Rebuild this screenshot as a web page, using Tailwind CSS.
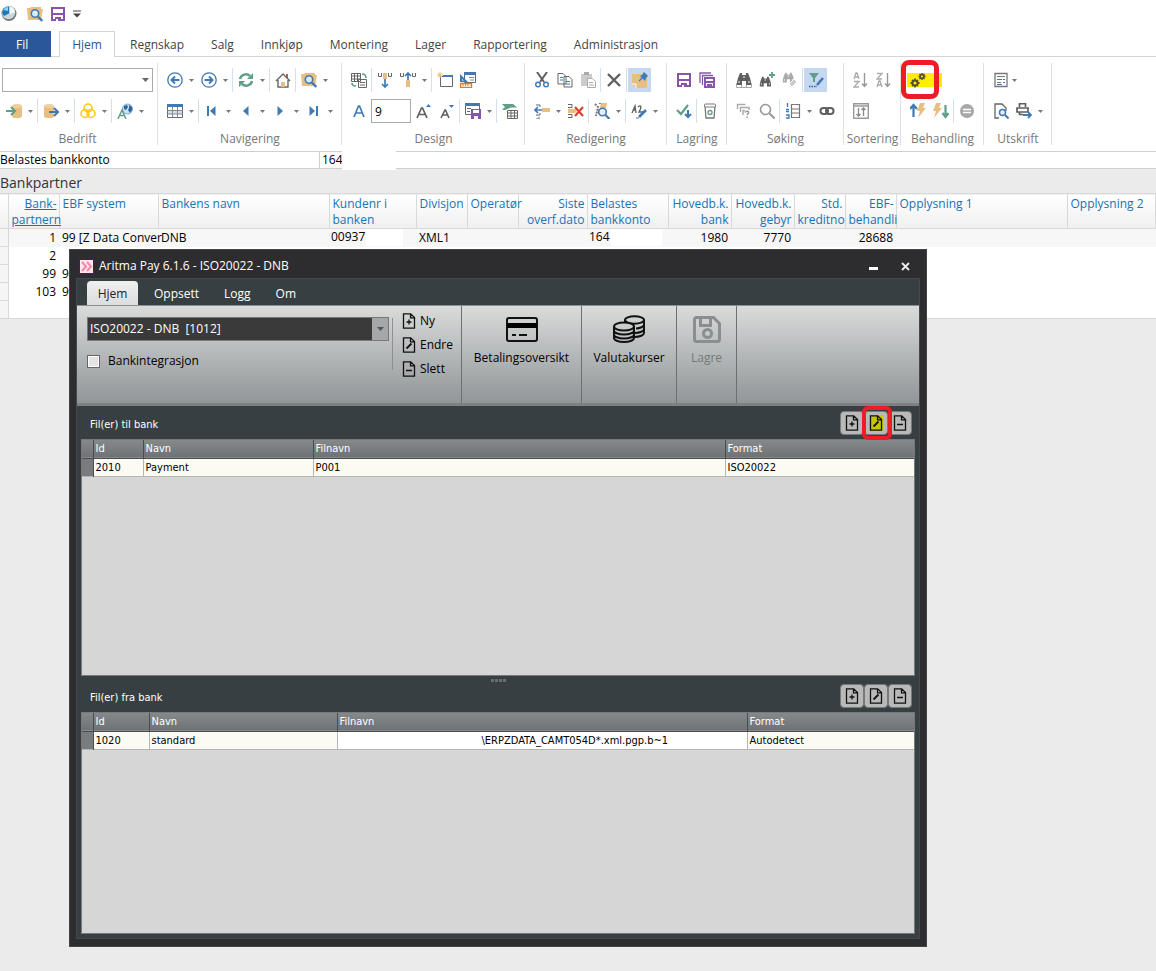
<!DOCTYPE html>
<html lang="no">
<head>
    <meta charset="UTF-8">
    <meta name="viewport" content="width=device-width, initial-scale=1.0">
    <title>Bankpartner</title>
    <script src="https://cdn.jsdelivr.net/npm/@tailwindcss/browser@4"></script>
</head>
<body class="relative flex min-h-screen flex-col overflow-x-hidden bg-[#ebebeb] font-['Open_Sans',sans-serif] text-xs text-black">
    <!-- Shared icons -->
    <svg class="hidden">
        <symbol id="doc-add" viewBox="0 0 14 16"><path d="M1.5 .8h7.200l3.800 3.800v10.600h-11zM8.500.8v4h4M7 6.500v5M4.500 9h5" fill="none" stroke="#111" stroke-width="1.300"/></symbol>
        <symbol id="doc-edit" viewBox="0 0 14 16"><path d="M1.500 .8h7.200l3.800 3.800v10.600h-11zM8.500.8v4h4" fill="none" stroke="#111" stroke-width="1.300"/><path d="M4.500 11.500l5-5" stroke="#111" stroke-width="1.800"/></symbol>
        <symbol id="doc-remove" viewBox="0 0 14 16"><path d="M1.500 .8h7.200l3.800 3.800v10.600h-11zM8.500.8v4h4M4 9.500h6" fill="none" stroke="#111" stroke-width="1.300"/></symbol>
        <symbol id="floppy" viewBox="0 0 16 16"><path d="M2 2h12v12H2z" fill="#fff" stroke="#8a54ab" stroke-width="2"/><path d="M2 8h12" stroke="#8a54ab" stroke-width="2"/><path d="M5 11h6v4H5z" fill="#8a54ab"/><path d="M6 13h2v2H6z" fill="#fff"/></symbol>
        <symbol id="folder-search" viewBox="0 0 16 16"><path d="M0 2h3l1-1h10v2h2l-2 11H1z" fill="#e8bf83"/><circle cx="8" cy="7.500" r="3.700" fill="#d9ecf8" stroke="#3f7ab5" stroke-width="1.600"/><path d="M10.800 10.500l4.500 4.500" stroke="#3f7ab5" stroke-width="2.400"/></symbol>
    </svg>

    <header class="bg-white">
        <!-- Quick access -->
        <div class="flex h-[31px] items-center pb-1">
            <svg class="size-[18px]" viewBox="0 0 18 18"><circle cx="9" cy="8.500" r="7.500" fill="#6f787e"/><circle cx="8.500" cy="7.500" r="6.700" fill="#cdd5da"/><path d="M2 8a6.500 6.500 0 0 1 7-6.500v7L4 11z" fill="#1f78b8"/><path d="M3.500 5a5 5 0 0 1 4.500-3v4z" fill="#8fd0f0"/><path d="M10 2c3 0 5 2 5 5.500L10 9z" fill="#f3f6f8"/></svg>
            <button class="ml-[9px]" aria-label="Søk"><svg class="size-4"><use href="#folder-search"/></svg></button>
            <button class="ml-[7px]" aria-label="Lagre"><svg class="size-4"><use href="#floppy"/></svg></button>
            <button class="ml-[7px]" aria-label="Tilpass"><svg class="h-2 w-2" viewBox="0 0 8 8"><path d="M0 1h8" stroke="#444"/><path d="M0 3.500h8L4 7.500z" fill="#444"/></svg></button>
        </div>
        <nav class="flex h-[26px] items-stretch whitespace-nowrap text-[#444]">
            <a href="#" class="flex w-[51px] items-center bg-[#2a579a] pt-0.5 pl-4 text-white">Fil</a>
            <span class="w-2 border-b border-[#d5d5d5]"></span>
            <a href="#" class="flex w-14 items-center justify-center border border-b-0 border-[#d5d5d5] text-[#2a579a]">Hjem</a>
            <div class="flex flex-1 items-center gap-[27px] border-b border-[#d5d5d5] pt-0.5 pl-[15px]">
                <a href="#">Regnskap</a>
                <a href="#">Salg</a>
                <a href="#">Innkjøp</a>
                <a href="#">Montering</a>
                <a href="#">Lager</a>
                <a href="#">Rapportering</a>
                <a href="#">Administrasjon</a>
            </div>
        </nav>
        <div id="ribbon" class="flex h-[94px] items-start pt-1.5"></div>
    </header>

    <div class="flex h-[18px] items-center border-y border-[#cfcfcf] bg-white leading-4">
        <span class="w-[319px] shrink-0">Belastes bankkonto</span>
        <span class="w-[23px] overflow-hidden border-l border-[#cfcfcf] pl-0.5">164</span>
        <span class="h-5 w-[54px] bg-white"></span>
    </div>

    <main>
        <h1 class="h-6 pt-0.5 text-sm leading-6 text-[#333]">Bankpartner</h1>
        <table class="w-full table-fixed border-collapse border-b border-[#d9d9d9] bg-white leading-4">
            <colgroup>
                <col class="w-[8px]"><col class="w-[51px]"><col class="w-[99px]"><col class="w-[171px]"><col class="w-[87px]">
                <col class="w-[51px]"><col class="w-[51px]"><col class="w-[69px]"><col class="w-[81px]"><col class="w-[63px]">
                <col class="w-[63px]"><col class="w-[51px]"><col class="w-[51px]"><col class="w-[171px]"><col>
            </colgroup>
            <thead>
                <tr id="columns" class="h-[35px] border-y border-[#d9d9d9] bg-linear-to-b from-white to-[#f0f0f0] text-[#1673b6]"></tr>
            </thead>
            <tbody id="rows"></tbody>
        </table>
    </main>

    <!-- Aritma Pay window -->
    <section class="absolute top-[249px] left-[69px] flex h-[698px] w-[858px] flex-col border border-[#444] bg-[#2d2d2f] px-[6px] pb-[7px] text-white">
        <div class="flex h-7 items-center pt-1 pl-[3px]">
            <svg class="size-[15px]" viewBox="0 0 15 15"><path d="M.5.5h14v14H.5z" fill="#fde6ee" stroke="#4b1a5e"/><path d="M3 3l4 4.500-4 4.500M8 3l4 4.500-4 4.500" fill="none" stroke="#f585aa" stroke-width="2"/></svg>
            <h2 class="ml-[5px] flex-1">Aritma Pay 6.1.6 - ISO20022 - DNB</h2>
            <button class="mr-[23px]" aria-label="Minimer"><svg class="h-[9px] w-[9px]" viewBox="0 0 9 9"><path d="M0 5h9v3H0z" fill="#fff"/></svg></button>
            <button class="mr-[10px]" aria-label="Lukk"><svg class="h-[9px] w-[9px]" viewBox="0 0 9 9"><path d="M1 1l7 7M8 1L1 8" stroke="#eee" stroke-width="1.800"/></svg></button>
        </div>

        <div class="flex min-h-0 flex-1 flex-col border border-[#45494b] bg-[#383f42]">
            <nav class="flex h-[26px] shrink-0 items-end pl-[10px]">
                <a href="#" class="flex h-6 w-[51px] items-center justify-center rounded-t-sm bg-linear-to-b from-[#f0f0f0] to-[#dcdddd] pt-0.5 text-[#222]">Hjem</a>
                <div class="ml-4 flex h-6 items-center gap-[25px] pt-0.5">
                    <a href="#">Oppsett</a>
                    <a href="#">Logg</a>
                    <a href="#">Om</a>
                </div>
            </nav>
            <div class="flex h-[101px] shrink-0 border-t border-b-3 border-t-[#8b8f90] border-b-[#7f8081] bg-linear-to-b from-[#dadcdb] via-[#b5b8b9] to-[#929698] text-black">
                <div class="flex w-[385px] border-r border-[#6d7072]">
                    <div class="w-[315px] pt-[11px] pl-[10px]">
                        <div class="relative w-[302px]">
                            <select aria-label="Profil" class="block h-6 w-full appearance-none border border-[#777] bg-[#3a3a3a] pl-0.5 text-white">
                                <option>ISO20022 - DNB&nbsp; [1012]</option>
                            </select>
                            <span class="pointer-events-none absolute inset-y-px right-px grid w-4 place-items-center bg-[#a5a7a8]"><svg class="h-1 w-[7px]" viewBox="0 0 7 4"><path d="M0 0h7L3.500 4z" fill="#555"/></svg></span>
                        </div>
                        <label class="mt-3 flex items-center gap-2 leading-4">
                            <input type="checkbox" class="size-[13px] appearance-none border border-[#666] bg-[#e2e3e3] outline-1 -outline-offset-2 outline-white">
                            Bankintegrasjon
                        </label>
                    </div>
                    <div class="mt-3 h-[52px] w-px bg-[#8d9092]"></div>
                    <div class="flex flex-col gap-2 pt-[7px] pl-[9px] leading-4">
                        <button class="flex items-center gap-1"><svg class="h-4 w-3.5"><use href="#doc-add"/></svg>Ny</button>
                        <button class="flex items-center gap-1"><svg class="h-4 w-3.5"><use href="#doc-edit"/></svg>Endre</button>
                        <button class="flex items-center gap-1"><svg class="h-4 w-3.5"><use href="#doc-remove"/></svg>Slett</button>
                    </div>
                </div>
                <button class="flex w-[120px] flex-col items-center border-r border-[#6d7072] pt-2">
                    <svg class="h-8 w-8" viewBox="0 0 32 32"><rect x="1" y="4" width="30" height="23" rx="2" fill="none" stroke="#111" stroke-width="2"/><path d="M1 9h30v5H1z"/><path d="M6 21h4M13 21h8" stroke="#111" stroke-width="1.800"/></svg>
                    <span class="mt-1 leading-4">Betalingsoversikt</span>
                </button>
                <button class="flex w-[95px] flex-col items-center border-r border-[#6d7072] pt-2">
                    <svg class="h-8 w-8" viewBox="0 0 32 32" fill="none" stroke="#111" stroke-width="2"><ellipse cx="21.500" cy="6" rx="9.500" ry="3.700"/><path d="M12 6v3M31 6v13c0 2-4 4-9.500 4M31 10.500c0 2-4 4-8 4M31 15c0 2-4 4-9 4"/><ellipse cx="11" cy="12.500" rx="10" ry="4"/><path d="M1 12.500v11.500c0 2 4 4 10 4s10-2 10-4v-11.500M1 16.500c0 2 4 4 10 4s10-2 10-4M1 20.500c0 2 4 4 10 4s10-2 10-4"/></svg>
                    <span class="mt-1 leading-4">Valutakurser</span>
                </button>
                <button class="flex w-[60px] flex-col items-center border-r border-[#6d7072] pt-2 text-[#75797b]" disabled>
                    <svg class="h-8 w-8" viewBox="0 0 32 32" fill="none" stroke="#8b8e90" stroke-width="3"><path d="M5.500 3.500h17l6 6v16a2 2 0 0 1-2 2h-21a2 2 0 0 1-2-2v-20a2 2 0 0 1 2-2z"/><path d="M9.500 4v7.500h10V4"/><circle cx="16.500" cy="19.500" r="4"/></svg>
                    <span class="mt-1 leading-4">Lagre</span>
                </button>
            </div>

            <div class="flex min-h-0 flex-1 flex-col px-1 pb-1 font-['DejaVu_Sans_Condensed','Open_Sans',sans-serif] text-[11px]">
                <div class="flex h-[33px] shrink-0 items-center pl-[9px]">
                    <h3 class="flex-1 pt-1.5">Fil(er) til bank</h3>
                    <div class="relative mr-[3px] flex">
                        <button class="grid size-6 place-items-center rounded-sm border border-[#77797a] bg-[#b9b9ba]" aria-label="Ny fil til bank"><svg class="h-4 w-3.5"><use href="#doc-add"/></svg></button>
                        <button class="grid size-6 place-items-center rounded-sm border border-[#77797a] bg-[#b9b9ba]" aria-label="Endre fil til bank"><svg class="h-4 w-3.5 bg-[#c9c400]"><use href="#doc-edit"/></svg></button>
                        <button class="grid size-6 place-items-center rounded-sm border border-[#77797a] bg-[#b9b9ba]" aria-label="Slett fil til bank"><svg class="h-4 w-3.5"><use href="#doc-remove"/></svg></button>
                        <span class="pointer-events-none absolute -top-[5px] left-[22px] h-[34px] w-[30px] rounded-md border-4 border-[#ee1c24]"></span>
                    </div>
                </div>
                <div class="min-h-0 flex-1 border border-[#77797a] bg-[#d6d6d6]">
                    <table class="w-full table-fixed border-collapse leading-4 text-black">
                        <colgroup><col class="w-[11px]"><col class="w-[50px]"><col class="w-[170px]"><col class="w-[412px]"><col></colgroup>
                        <thead>
                            <tr class="h-[18px] border-b border-[#4a4c4e] bg-linear-to-b from-[#85898b] to-[#6f7375] text-left text-white">
                                <th class="border-r border-[#4a4c4e]"></th>
                                <th class="border-r border-[#4a4c4e] pt-px pl-0.5 font-normal">Id</th>
                                <th class="border-r border-[#4a4c4e] pt-px pl-0.5 font-normal">Navn</th>
                                <th class="border-r border-[#4a4c4e] pt-px pl-0.5 font-normal">Filnavn</th>
                                <th class="pt-px pl-0.5 font-normal">Format</th>
                            </tr>
                        </thead>
                        <tbody>
                            <tr class="h-[18px] border-b border-[#b5b5b5] bg-[#fcfbf3]">
                                <td class="border-r border-[#4a4c4e] bg-[#787c7e]"></td>
                                <td class="border-r border-[#b5b5b5] pt-px pl-0.5">2010</td>
                                <td class="border-r border-[#b5b5b5] pt-px pl-0.5">Payment</td>
                                <td class="border-r border-[#b5b5b5] pt-px pl-0.5">P001</td>
                                <td class="pt-px pl-0.5">ISO20022</td>
                            </tr>
                        </tbody>
                    </table>
                </div>

                <!-- Splitter -->
                <div class="flex h-2 shrink-0 items-center justify-center gap-px">
                    <span class="size-[3px] bg-[#6a6e70]"></span><span class="size-[3px] bg-[#6a6e70]"></span><span class="size-[3px] bg-[#6a6e70]"></span><span class="size-[3px] bg-[#6a6e70]"></span>
                </div>

                <div class="flex h-7 shrink-0 items-start pl-[9px]">
                    <h3 class="flex-1 pt-1 leading-5">Fil(er) fra bank</h3>
                    <div class="mr-[3px] flex">
                        <button class="grid size-6 place-items-center rounded-sm border border-[#77797a] bg-[#b9b9ba]" aria-label="Ny fil fra bank"><svg class="h-4 w-3.5"><use href="#doc-add"/></svg></button>
                        <button class="grid size-6 place-items-center rounded-sm border border-[#77797a] bg-[#b9b9ba]" aria-label="Endre fil fra bank"><svg class="h-4 w-3.5"><use href="#doc-edit"/></svg></button>
                        <button class="grid size-6 place-items-center rounded-sm border border-[#77797a] bg-[#b9b9ba]" aria-label="Slett fil fra bank"><svg class="h-4 w-3.5"><use href="#doc-remove"/></svg></button>
                    </div>
                </div>
                <div class="h-[222px] shrink-0 border border-[#77797a] bg-[#d6d6d6]">
                    <table class="w-full table-fixed border-collapse leading-4 text-black">
                        <colgroup><col class="w-[11px]"><col class="w-[56px]"><col class="w-[188px]"><col class="w-[410px]"><col></colgroup>
                        <thead>
                            <tr class="h-[18px] border-b border-[#4a4c4e] bg-linear-to-b from-[#85898b] to-[#6f7375] text-left text-white">
                                <th class="border-r border-[#4a4c4e]"></th>
                                <th class="border-r border-[#4a4c4e] pt-px pl-0.5 font-normal">Id</th>
                                <th class="border-r border-[#4a4c4e] pt-px pl-0.5 font-normal">Navn</th>
                                <th class="border-r border-[#4a4c4e] pt-px pl-0.5 font-normal">Filnavn</th>
                                <th class="pt-px pl-0.5 font-normal">Format</th>
                            </tr>
                        </thead>
                        <tbody>
                            <tr class="h-[18px] border-b border-[#b5b5b5] bg-[#fcfbf3]">
                                <td class="border-r border-[#4a4c4e] bg-[#787c7e]"></td>
                                <td class="border-r border-[#b5b5b5] pt-px pl-0.5">1020</td>
                                <td class="border-r border-[#b5b5b5] pt-px pl-0.5">standard</td>
                                <td class="border-r border-[#b5b5b5] bg-white pt-px pl-36">\ERPZDATA_CAMT054D*.xml.pgp.b~1</td>
                                <td class="pt-px pl-0.5">Autodetect</td>
                            </tr>
                        </tbody>
                    </table>
                </div>
            </div>
        </div>
    </section>

    <script>
        const binoculars = (c) => `<path d="M4 1h2v2h4V1h2l2 5 1 4v3h-5V9H6v4H1v-3l1-4z" fill="${c}"/><path d="M3 9v2M13 9v2M7 5h2" stroke="#fff"/>`;
        const icons = {
            dbIn: '<path d="M6 3v10c0 3 10 3 10 0V3z" fill="#e8bf83"/><ellipse cx="11" cy="3" rx="5" ry="2" fill="#f0cf9d"/><path d="M0 8h8M5 4l4 4-4 4" fill="none" stroke="#5f9e87" stroke-width="2"/>',
            dbOut: '<path d="M1 3v10c0 3 10 3 10 0V3z" fill="#e8bf83"/><ellipse cx="6" cy="3" rx="5" ry="2" fill="#f0cf9d"/><path d="M6 9h9M11 5l4 4-4 4" fill="none" stroke="#3f7ab5" stroke-width="2"/>',
            rings: '<g fill="none" stroke="#ffc60b" stroke-width="1.500"><circle cx="8" cy="5" r="4"/><circle cx="5" cy="10.500" r="4"/><circle cx="11" cy="10.500" r="4"/></g>',
            globe: '<circle cx="10.500" cy="6" r="5" fill="#cfe0f0" stroke="#7ba3cb"/><path d="M7 3l3-1 1 2-2 3-2-1zM12 2l3 2v3l-2 3-2-3 1-2z" fill="#2c669f"/><path d="M1 16l4-9 4 9M2.500 12.500h5" fill="none" stroke="#5f9e87" stroke-width="1.500"/>',
            back: '<circle cx="8" cy="8" r="7.200" fill="#fff" stroke="#3f7ab5" stroke-width="1.300"/><path d="M12.500 8H5M8 4.500L4.500 8 8 11.500" fill="none" stroke="#3f7ab5" stroke-width="2"/>',
            forward: '<circle cx="8" cy="8" r="7.200" fill="#fff" stroke="#3f7ab5" stroke-width="1.300"/><path d="M3.500 8H11M8 4.500L11.500 8 8 11.500" fill="none" stroke="#3f7ab5" stroke-width="2"/>',
            refresh: '<path d="M2 7a6 6 0 0 1 10-3M14 9a6 6 0 0 1-10 3" fill="none" stroke="#5f9e87" stroke-width="2.500"/><path d="M15 1v6H9zM1 15V9h6z" fill="#5f9e87"/>',
            home: '<path d="M11 2h2v4h-2z" fill="#d8532e"/><path d="M1 9l7-7 7 7M3 8v7h10V8" fill="none" stroke="#666" stroke-width="1.400"/><path d="M6 10h4v5H6z" fill="#e8bf83"/>',
            folderSearch: '<use href="#folder-search"/>',
            table: '<path d="M.5 1.500h15v13H.5z" fill="#fff" stroke="#666"/><path d="M0 1h16v3H0z" fill="#3f7ab5"/><path d="M1 8h14v3H1z" fill="#cfe0f3"/><path d="M0 7.500h16M0 11h16M5.500 4v11M10.500 4v11" stroke="#888"/>',
            first: '<path d="M4 3v10" stroke="#3f7ab5" stroke-width="2"/><path d="M11.500 3v10L6 8z" fill="#3f7ab5"/>',
            prev: '<path d="M10.500 3v10L5 8z" fill="#3f7ab5"/>',
            next: '<path d="M5.500 3v10L11 8z" fill="#3f7ab5"/>',
            last: '<path d="M3.500 3v10L9 8z" fill="#3f7ab5"/><path d="M11 3v10" stroke="#3f7ab5" stroke-width="2"/>',
            switchView: '<path d="M.5 1.500h9v8h-9zM.5 4h9M.5 7h9M3.500 2v7M6.500 2v7M7.500 7.500h8v8h-8z" fill="#fff" stroke="#666"/><path d="M9 10.500h5M9 13h5" stroke="#666"/><path d="M11 2c3 0 4 1 4 4M1 11c0 2 1 3 4 3" fill="none" stroke="#5f9e87" stroke-width="1.600"/>',
            insertDown: '<path d="M1.500 1v3.500h3V1M11.500 1v3.500h3V1" fill="none" stroke="#666"/><path d="M6 1h4v6H6z" fill="#e8bf83"/><path d="M8 7v8M5 12l3 3 3-3" fill="none" stroke="#3f7ab5" stroke-width="1.700"/>',
            insertUp: '<path d="M.5 1v3.500h3V1M12.500 1v3.500h3V1" fill="none" stroke="#666"/><path d="M6 8h4v7H6z" fill="#e8bf83"/><path d="M8 8V1M5 4l3-3 3 3" fill="none" stroke="#3f7ab5" stroke-width="1.700"/>',
            newWindow: '<path d="M3.500 4.500h12v10h-12z" fill="#fff" stroke="#666"/><path d="M6 3h10v2H6z" fill="#3f7ab5"/><path d="M3 0v6M0 3h6M1 1l4 4M5 1L1 5" stroke="#e8bf83"/>',
            designer: '<path d="M4.500 1.500h11v9h-11z" fill="#fff" stroke="#666"/><path d="M4 0h12v3H4z" fill="#3f7ab5"/><path d="M0 2v8h8z" fill="#3f7ab5"/><path d="M2 7v1.500h2z" fill="#fff"/><path d="M9 5.500h5M10 8h4" stroke="#888"/><path d="M.5 11.500h11v4H.5z" fill="#fff" stroke="#e07b20" stroke-width="1.400"/><path d="M3 12v2M5.500 12v2M8 12v2" stroke="#e07b20"/>',
            fontA: '<path d="M3 14L7.500 3h1L13 14M5 10h6" fill="none" stroke="#3f7ab5" stroke-width="1.700"/>',
            fontUp: '<path d="M1 15L5.500 5h1L11 15M3 11.500h6" fill="none" stroke="#5f5f5f" stroke-width="1.700"/><path d="M10 4l2.500-3L15 4z" fill="#3f7ab5"/>',
            fontDown: '<path d="M2 15L6 7h.5L10 15M4 12h5" fill="none" stroke="#5f5f5f" stroke-width="1.600"/><path d="M10 2h5l-2.500 3z" fill="#3f7ab5"/>',
            saveLayout: '<path d="M.5 1.500h14v10H.5z" fill="#fff" stroke="#666"/><path d="M0 0h15v3H0z" fill="#3f7ab5"/><path d="M2 5.500h4M2 8.500h3" stroke="#666"/><path d="M6 6h10v10H6z" fill="#8a54ab"/><path d="M8 7h6v3H8zM9 13h4v3H9z" fill="#fff"/>',
            pivot: '<path d="M0 1h11l4 3.500H9L3 7H0l3-3z" fill="#5f9e87"/><path d="M5.500 7.500h10v8h-10zM5.500 10h10M5.500 13h10M9 7.500v8M12.500 7.500v8" fill="#fff" stroke="#666"/>',
            cut: '<path d="M3 0l7 10M13 0L6 10" stroke="#5f5f5f" stroke-width="2"/><circle cx="4" cy="12.500" r="2.300" fill="none" stroke="#3f7ab5" stroke-width="1.400"/><circle cx="12" cy="12.500" r="2.300" fill="none" stroke="#3f7ab5" stroke-width="1.400"/>',
            copy: '<path d="M1 1.500h5l3 3V12H1zM7 4.500h5l3 3V15H7z" fill="#fff" stroke="#666"/><path d="M3 5.500h3M3 8h3M9 9.500h4M9 12h4" stroke="#3f7ab5"/>',
            paste: '<path d="M1 2h11v12H1z" fill="#ccc"/><path d="M4 0h5v3H4z" fill="#aaa"/><path d="M7.500 6.500h5l3 3v6h-8z" fill="#fff" stroke="#aaa"/><path d="M9 10.500h4M9 13h5" stroke="#aaa"/>',
            remove: '<path d="M2 2l12 12M14 2L2 14" stroke="#5f5f5f" stroke-width="2.400"/>',
            pinNote: '<path d="M0 2h15v14H4l-4-4z" fill="#e8bf83"/><path d="M0 12h4v4" fill="none" stroke="#fff"/><path d="M7 9l3-3" stroke="#3f7ab5" stroke-width="1.300"/><path d="M8 4l5 5 1-3 2-2-4-4-2 3z" fill="#3f7ab5"/>',
            insertRow: '<path d="M2 2h4v2M2 12h4v-2M2 16h3v-2" fill="none" stroke="#666"/><path d="M8 5h8v4H8z" fill="#e8bf83"/><path d="M8 7H1M4 4L1 7l3 3" fill="none" stroke="#3f7ab5" stroke-width="1.700"/>',
            deleteRow: '<path d="M0 1.500h4v3H0M0 11.500h4v3H0" fill="none" stroke="#666"/><path d="M0 6h7l2 2-2 2H0z" fill="#e8bf83"/><path d="M7 4l8 9M15 4l-8 9" stroke="#d8432e" stroke-width="2.200"/>',
            searchData: '<path d="M1 1l3 3-2 9M5 0l7 1" fill="none" stroke="#777" stroke-width="2" stroke-dasharray="2 1"/><path d="M7 0h6l-1 5H6z" fill="#e8bf83"/><circle cx="8.500" cy="9" r="3.800" fill="#e5f1fa" stroke="#3f7ab5" stroke-width="1.600"/><path d="M11.500 12l4 4" stroke="#3f7ab5" stroke-width="2.200"/>',
            editText: '<path d="M1 10l3-7 1 7M2 7h3M7 4c3-3 4 0 1 5h4" fill="none" stroke="#5f5f5f" stroke-width="1.300"/><path d="M8 14l7-7" stroke="#3f7ab5" stroke-width="2.600"/><path d="M5 15h3" stroke="#3f7ab5"/>',
            floppy: '<use href="#floppy"/>',
            saveAll: '<path d="M1 11V1h11M3.500 13V3.500H14" fill="none" stroke="#8a54ab" stroke-width="1.300"/><path d="M6 6h9v9H6z" fill="#fff" stroke="#8a54ab" stroke-width="2"/><path d="M6 10h9" stroke="#8a54ab" stroke-width="2"/><path d="M8 12h5v3H8z" fill="#8a54ab"/>',
            approve: '<path d="M1 7l4 4 7-9" fill="none" stroke="#5f9e87" stroke-width="2.200"/><path d="M12 7v7M9 11l3 3 3-3" fill="none" stroke="#3f7ab5" stroke-width="2"/>',
            bin: '<path d="M3 3l1 12h8l1-12" fill="#fff" stroke="#777" stroke-width="1.300"/><rect x="2.500" y="1" width="11" height="3" rx="1" fill="#fff" stroke="#777"/><circle cx="8" cy="9.500" r="2" fill="none" stroke="#5f9e87" stroke-width="1.300"/>',
            find: binoculars('#5f5f5f') + '<path d="M.5 11v4.500h15V11M5.500 13v2M10.500 13v2" fill="none" stroke="#aaa"/>',
            findAdd: '<g transform="translate(0 4) scale(.8)">' + binoculars('#5f5f5f') + '</g><path d="M13 0v6M10 3h6" stroke="#5f9e87" stroke-width="1.800"/>',
            findClear: '<g transform="scale(.8)">' + binoculars('#aaa') + '</g><path d="M7 12l5-5 3 3-5 5z" fill="#ccc" stroke="#fff"/>',
            filter: '<path d="M1 1h10L7 6v4H5V6z" fill="#5f9e87"/><path d="M9 13l6-7" stroke="#3f7ab5" stroke-width="2.600"/><path d="M1 14.500h8" stroke="#2c669f" stroke-width="1.400" stroke-dasharray="1.500 1"/>',
            findHelp: '<path d="M1.500 6V1.500h8M4.500 9V4.500H13V7M7 12V7.500h2" fill="none" stroke="#aaa" stroke-width="1.400"/><path d="M9 9.500c1-2 4-1.500 3.500.5L11 12M11 13.500V15" fill="none" stroke="#999" stroke-width="1.500"/>',
            magnifier: '<circle cx="6.500" cy="6.500" r="5" fill="none" stroke="#999" stroke-width="1.600"/><path d="M10.500 10.500l5 5" stroke="#999" stroke-width="2"/>',
            numbered: '<path d="M2.500 0v4M1 6.500h3M1 8.500h3M1 12h3v3H1" fill="none" stroke="#3f7ab5" stroke-width="1.300"/><path d="M6.500 1.500h8v13h-8zM6.500 6h8M6.500 10h8" fill="none" stroke="#777" stroke-width="1.200"/>',
            link: '<g fill="none" stroke="#5f5f5f" stroke-width="2"><rect x="1.500" y="5" width="7.500" height="6" rx="3"/><rect x="7" y="5" width="7.500" height="6" rx="3"/></g>',
            sortAsc: '<path d="M1 7l2-6h1l2 6M2 5h3M1 9.500h5L1 15h5" fill="none" stroke="#aaa" stroke-width="1.300"/><path d="M11.500 1v13M9 11.500l2.500 3 2.500-3" fill="none" stroke="#999" stroke-width="1.400"/>',
            sortDesc: '<path d="M1 1.500h5L1 7h5M1 15l2-6h1l2 6M2 13h3" fill="none" stroke="#aaa" stroke-width="1.300"/><path d="M11.500 1v13M9 11.500l2.500 3 2.500-3" fill="none" stroke="#999" stroke-width="1.400"/>',
            sortBoth: '<path d="M.7 .7h14.600v14.600H.7zM1 3h14" fill="none" stroke="#999" stroke-width="1.400"/><path d="M5.500 5v8M3.500 11l2 2 2-2M10.500 13V5M8.500 7l2-2 2 2" fill="none" stroke="#888" stroke-width="1.300"/>',
            gears: '<g fill="none" stroke="#55512e"><circle cx="5" cy="11" r="2.500" stroke-width="2"/><path d="M5 6.500v2M5 13.500v2M.5 11h2M7.500 11h2M2 8l1.300 1.300M6.700 12.700L8 14M8 8L6.700 9.300M3.300 12.700L2 14" stroke-width="1.800"/><circle cx="12" cy="4.500" r="1.900" stroke-width="1.700"/><path d="M12 1v1.500M12 6.500V8M8.500 4.500H10M14 4.500h1.500M9.500 2l1 1M13.500 6l1 1M14.500 2l-1 1M10.500 6l-1 1" stroke-width="1.400"/></g>',
            runUp: '<path d="M3.500 14V3M0 6l3.500-4L7 6" fill="none" stroke="#3f7ab5" stroke-width="2.200"/><path d="M10 0h5l-2 5h3L8 15l2-7H7z" fill="#e8bf83"/>',
            runDown: '<path d="M3 0h5L6 5h3L1 15l2-7H0z" fill="#e8bf83"/><path d="M12.500 2v11M9.500 10l3 4 3-4" fill="none" stroke="#5f9e87" stroke-width="2.200"/>',
            stop: '<circle cx="8" cy="8" r="7" fill="#a8a8a8"/><path d="M4 6.500h8M4 9.500h8" stroke="#fff" stroke-width="1.600"/>',
            report: '<path d="M2 1.500h12v13H2z" fill="#fff" stroke="#777" stroke-width="1.300"/><path d="M4 4.500h8M4 10.500h4" stroke="#777"/><path d="M4 7.500h5M4 12.500h5M10 7.500h2M10 10.500h2" stroke="#3f7ab5"/>',
            preview: '<path d="M6 15H2V1h7l4 4v3" fill="none" stroke="#666" stroke-width="1.300"/><circle cx="9.500" cy="9.500" r="3" fill="#e5f1fa" stroke="#3f7ab5" stroke-width="1.500"/><path d="M12 12l3.500 3.500" stroke="#3f7ab5" stroke-width="2"/>',
            print: '<path d="M3.500 4V.7h6V4M1 5h11v4H1zM3.500 9v2.500H7" fill="none" stroke="#5f5f5f" stroke-width="1.700"/><path d="M7 12h8M12 9l3 3-3 3" fill="none" stroke="#3f7ab5" stroke-width="1.800"/>',
        };

        // '|' is a separator, 'v' a drop-down arrow, a trailing '*' marks a pressed button
        const groups = [
            { name: 'Bedrift', css: 'w-[158px] pl-0.5', rows: [['combo'], ['dbIn', 'v', '|', 'dbOut', 'v', '|', 'rings', 'v', '|', 'globe', 'v']] },
            { name: 'Navigering', css: 'w-[184px] pl-[5px]', rows: [['back', 'v', 'forward', 'v', '|', 'refresh', 'v', '|', 'home', '|', 'folderSearch', 'v'], ['table', 'v', '|', 'first', 'v', 'prev', 'v', 'next', 'v', 'last', 'v']] },
            { name: 'Design', css: 'w-[183px] pl-[5px]', rows: [['switchView', '|', 'insertDown', 'insertUp', 'v', '|', 'newWindow', 'designer'], ['fontA', 'size', 'fontUp', 'fontDown', '|', 'saveLayout', 'v', '|', 'pivot']] },
            { name: 'Redigering', css: 'w-[142px] pl-[5px]', rows: [['cut', 'copy', 'paste', '|', 'remove', '|', 'pinNote*'], ['insertRow', 'v', 'deleteRow', '|', 'searchData', 'v', '|', 'editText', 'v']] },
            { name: 'Lagring', css: 'w-[60px] pl-[5px]', rows: [['floppy', 'saveAll'], ['approve', '|', 'bin']] },
            { name: 'Søking', css: 'w-[117px] pl-[5px]', rows: [['find', 'findAdd', 'findClear', '|', 'filter*'], ['findHelp', 'magnifier', '|', 'numbered', 'v', 'link']] },
            { name: 'Sortering', css: 'w-[57px] pl-[5px]', rows: [['sortAsc', 'sortDesc'], ['sortBoth']] },
            { name: 'Behandling', css: 'w-[83px] pl-[5px]', rows: [['marked'], ['runUp', 'runDown', '|', 'stop']] },
            { name: 'Utskrift', css: 'w-[68px] pl-[5px]', rows: [['report', 'v'], ['preview', 'print', 'v']] },
        ];

        function item(key) {
            if (key === '|') return '<span class="mx-px h-6 w-px shrink-0 bg-[#d3e0f0]"></span>';
            if (key === 'v') return '<button class="grid h-6 w-[11px] shrink-0 place-items-center" aria-label="Flere valg"><svg class="h-[3px] w-[5px]" viewBox="0 0 5 3"><path d="M0 0h5L2.500 3z" fill="#777"/></svg></button>';
            if (key === 'combo') return `
                <div class="relative w-[151px]">
                    <select aria-label="Bedrift" class="block h-6 w-full appearance-none border border-[#ababab] bg-white"><option></option></select>
                    <svg class="pointer-events-none absolute top-[10px] right-1 h-1 w-[7px]" viewBox="0 0 7 4"><path d="M0 0h7L3.500 4z" fill="#666"/></svg>
                </div>`;
            if (key === 'size') return '<input aria-label="Skriftstørrelse" value="9" class="mx-px h-6 w-10 border border-[#ababab] bg-white pl-[3px]">';
            if (key === 'marked') return `
                <div class="relative">
                    <span class="absolute top-[5px] left-px h-[14px] w-[35px] bg-[#ffee00]"></span>
                    ${item('gears')}
                    <span class="pointer-events-none absolute -top-2 -left-[5px] h-[39px] w-[38px] rounded-lg border-5 border-[#ee1c24]"></span>
                </div>`;
            const pressed = key.endsWith('*');
            const name = key.replace('*', '');
            return `<button aria-label="${name}" class="relative grid h-6 shrink-0 place-items-center ${name === 'report' ? 'ml-1 w-4' : 'w-[23px]'} ${pressed ? 'bg-[#c5d7f1]' : ''}"><svg class="size-4" viewBox="0 0 16 16">${icons[name]}</svg></button>`;
        }

        document.getElementById('ribbon').innerHTML = groups.map(g => `
            <div class="shrink-0 border-r border-[#e1e1e1] pt-[5px] ${g.css}">
                <div class="flex h-6 items-center">${g.rows[0].map(item).join('')}</div>
                <div class="mt-[7px] flex h-6 items-center">${g.rows[1].map(item).join('')}</div>
                <div class="-ml-1 mt-2.5 text-center leading-3 text-[#777]">${g.name}</div>
            </div>`).join('');

        const columns = ['', 'Bank-<br>partnern', 'EBF system', 'Bankens navn', 'Kundenr i<br>banken', 'Divisjon', 'Operatør', 'Siste<br>overf.dato', 'Belastes<br>bankkonto', 'Hovedb.k.<br>bank', 'Hovedb.k.<br>gebyr', 'Std.<br>kreditno', 'EBF-<br>behandli', 'Opplysning 1', 'Opplysning 2'];
        const right = [1, 7, 9, 10, 11, 12];

        document.getElementById('columns').innerHTML = columns.map((text, i) => `
            <th class="border-r border-[#d9d9d9] py-0 pt-0.5 pr-0.5 pl-[3px] align-top font-normal whitespace-nowrap ${i === 1 ? 'underline' : ''} ${right.includes(i) ? 'text-right' : 'text-left'}">${text}</th>`).join('');

        const data = [
            ['', '1', '99 [Z Data Conver', 'DNB', '00937', 'XML1', '', '', '164', '1980', '7770', '', '28688', '', ''],
            ['', '2'],
            ['', '99', '99'],
            ['', '103', '99'],
            ['', ''],
        ];

        document.getElementById('rows').innerHTML = data.map((row, r) => `
            <tr class="h-[18px] ${r === 0 ? 'bg-[#f7f7f7]' : 'bg-white'}">${columns.map((_, i) => {
                const text = row[i] || '';
                if (i === 0) return '<td class="border-r border-b border-[#d9d9d9] bg-[#f5f5f5]"></td>';
                // Account numbers are masked after the first digits
                if (r === 0 && i === 4) return `<td class="p-0"><div class="flex h-[17px]"><span class="w-[37px] pl-0.5">${text}</span><span class="w-[37px] bg-white"></span></div></td>`;
                if (r === 0 && i === 8) return `<td class="p-0"><div class="flex h-[17px]"><span class="w-[24px] pl-0.5">${text}</span><span class="w-[51px] bg-white"></span></div></td>`;
                return `<td class="py-0 pr-[3px] pl-[3px] leading-4 whitespace-nowrap ${right.includes(i) ? 'text-right' : ''}">${text}</td>`;
            }).join('')}</tr>`).join('');
    </script>
</body>
</html>
